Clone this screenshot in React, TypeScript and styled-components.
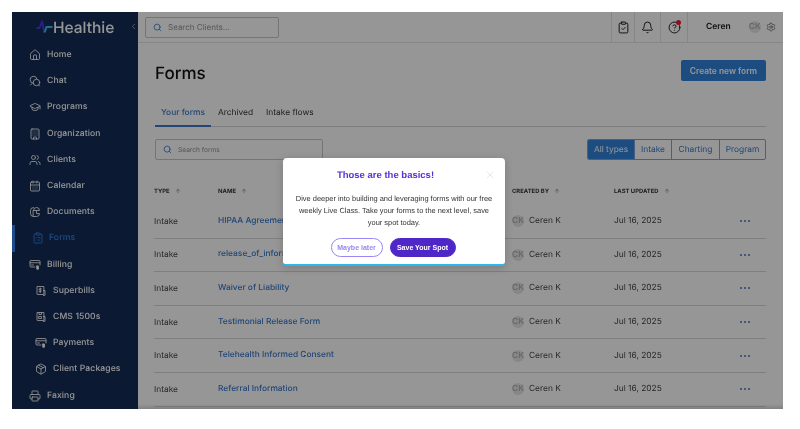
import React from 'react';
import styled, { createGlobalStyle } from 'styled-components';
import {
  ArrowUp,
  Bell,
  Building,
  CalendarDays,
  ChevronLeft,
  ClipboardCheck,
  ClipboardList,
  CircleHelp,
  GraduationCap,
  House,
  Package,
  Printer,
  Search,
  Settings,
  Users,
  X,
} from 'lucide-react';

const GlobalStyle = createGlobalStyle`
  html, body {
    margin: 0;
    padding: 0;
    background: #fff;
    font-family: Inter, "Liberation Sans", sans-serif;
    text-rendering: geometricPrecision;
    -webkit-font-smoothing: antialiased;
  }
  * {
    box-sizing: border-box;
  }
`;

const Page = styled.div`
  width: 800px;
  height: 429px;
  padding: 12px 17px 20px 12px;
`;

const Frame = styled.div`
  position: relative;
  display: flex;
  height: 397px;
  overflow: hidden;
  background: #fff;
  filter: blur(0.55px);
`;

const Sidebar = styled.aside`
  width: 126px;
  flex-shrink: 0;
  background: #132c56;
  display: flex;
  flex-direction: column;
`;

const Brand = styled.div`
  height: 30px;
  display: flex;
  align-items: center;
  padding-left: 24px;
  color: #fff;
  font-size: 15.5px;
  font-weight: 500;
  position: relative;
`;

const Collapse = styled.span`
  position: absolute;
  right: 0;
  top: 10px;
  color: #b5b5b5;
  display: flex;
`;

const Nav = styled.nav`
  display: flex;
  flex-direction: column;
`;

const NavItem = styled.div<{ $level: number; $active?: boolean }>`
  height: 26.2px;
  display: flex;
  align-items: center;
  gap: ${(p) => (p.$active ? '5px' : '6px')};
  padding-left: ${(p) => 14 + p.$level * 3}px;
  color: ${(p) => (p.$active ? '#3083ea' : '#fff')};
  font-size: 8.6px;
  font-weight: 500;
  letter-spacing: 0.1px;
  border-left: 3px solid ${(p) => (p.$active ? '#3083ea' : 'transparent')};
  svg {
    width: 12px;
    height: 12px;
    flex-shrink: 0;
    stroke-width: 1.7;
  }
`;

const Main = styled.main`
  flex: 1;
  min-width: 0;
  display: flex;
  flex-direction: column;
`;

const Topbar = styled.header`
  height: 31px;
  flex-shrink: 0;
  display: flex;
  align-items: center;
  padding-left: 7px;
  border-bottom: 1px solid #e4e4e4;
`;

const SearchBox = styled.div<{ $w: number; $fs: number; $gap: number }>`
  width: ${(p) => p.$w}px;
  height: 21px;
  display: flex;
  align-items: center;
  gap: ${(p) => p.$gap}px;
  padding-left: 7px;
  border: 1px solid #c4c8ce;
  border-radius: 2px;
  color: #8f9399;
  font-size: ${(p) => p.$fs}px;
  svg {
    width: 9px;
    height: 9px;
    color: #3d79c8;
    stroke-width: 2.2;
  }
`;

const TopActions = styled.div`
  margin-left: auto;
  height: 100%;
  display: flex;
  align-items: stretch;
`;

const TopCell = styled.div<{ $w: number }>`
  width: ${(p) => p.$w}px;
  display: flex;
  align-items: center;
  justify-content: center;
  border-left: 1px solid #e4e4e4;
  color: #111;
  position: relative;
  svg {
    width: 13px;
    height: 13px;
    stroke-width: 1.7;
  }
`;

const RedDot = styled.span`
  position: absolute;
  top: 8px;
  right: 6px;
  width: 5px;
  height: 5px;
  border-radius: 50%;
  background: #ee1c2e;
`;

const UserArea = styled.div`
  width: 96px;
  display: flex;
  align-items: center;
  padding-left: 18px;
  border-left: 1px solid #e4e4e4;
  font-size: 8.5px;
  font-weight: 600;
  color: #222;
`;

const Gear = styled.span`
  display: flex;
  margin-left: 5px;
  color: #555;
  svg {
    width: 10px;
    height: 10px;
    stroke-width: 1.6;
  }
`;

const Avatar = styled.span<{ $push?: number }>`
  width: 12px;
  height: 12px;
  margin-left: ${(p) => p.$push ?? 0}px;
  flex-shrink: 0;
  border-radius: 50%;
  background: #e5e5e5;
  color: #adadad;
  display: inline-flex;
  align-items: center;
  justify-content: center;
  font-size: 8.4px;
  font-weight: 500;
`;

const Content = styled.section`
  flex: 1;
  min-height: 0;
  overflow: hidden;
  padding: 0 17px 0 16px;
  position: relative;
`;

const TitleRow = styled.div`
  height: 60px;
  display: flex;
  justify-content: space-between;
  align-items: flex-start;
  padding-top: 17px;
`;

const Title = styled.h1`
  margin: 0 0 0 1px;
  padding-top: 2px;
  font-size: 17px;
  font-weight: 500;
  line-height: 24px;
  color: #111;
`;

const CreateButton = styled.button`
  width: 85px;
  height: 21px;
  padding: 0;
  border: 0;
  border-radius: 2px;
  background: #3282dc;
  color: #fff;
  font: 600 8.4px Inter, sans-serif;
`;

const Tabs = styled.div`
  margin-left: 1px;
  height: 24px;
  display: flex;
  align-items: flex-start;
  border-bottom: 1px solid #d4d4d4;
`;

const Tab = styled.div<{ $active?: boolean }>`
  height: 24px;
  margin-right: ${(p) => (p.$active ? '7px' : '13px')};
  padding: ${(p) => (p.$active ? '0 6px' : '0')};
  line-height: 20px;
  font-size: 8.4px;
  font-weight: ${(p) => (p.$active ? 500 : 400)};
  color: ${(p) => (p.$active ? '#3a78c9' : '#333')};
  border-bottom: ${(p) => (p.$active ? '2px solid #3a78c9' : '0')};
`;

const FilterRow = styled.div`
  margin: 12px 0 0 1px;
  display: flex;
  justify-content: space-between;
`;

const Segments = styled.div`
  display: flex;
  height: 21px;
  border: 1px solid #7ba6dd;
  border-radius: 2px;
  overflow: hidden;
`;

const Segment = styled.div<{ $w: number; $active?: boolean }>`
  width: ${(p) => p.$w}px;
  display: flex;
  align-items: center;
  justify-content: center;
  font-size: 8.4px;
  color: ${(p) => (p.$active ? '#fff' : '#3a78c9')};
  background: ${(p) => (p.$active ? '#3282dc' : 'transparent')};
  & + & {
    border-left: 1px solid #7ba6dd;
  }
`;

const GRID = '64px 294px 102px 126px 1fr';

const HeadRow = styled.div`
  display: grid;
  grid-template-columns: ${GRID};
  align-items: center;
  height: 18px;
  margin: 22px 0 5px;
`;

const HeadCell = styled.div`
  display: flex;
  align-items: center;
  gap: 5px;
  font-size: 5.9px;
  font-weight: 700;
  color: #333;
  svg {
    width: 6px;
    height: 6px;
    color: #666;
  }
`;

const Row = styled.div`
  display: grid;
  grid-template-columns: ${GRID};
  align-items: center;
  height: 33.6px;
  border-bottom: 1px solid #d9d9d9;
  font-size: 8.4px;
  color: #444;
`;

const TypeCell = styled.div`
  padding-top: 1px;
`;

const NameCell = styled.div`
  padding-bottom: 1px;
  font-weight: 500;
  color: #3a78c9;
`;

const CreatorCell = styled.div`
  display: flex;
  align-items: center;
  gap: 5px;
`;

const Dots = styled.div`
  display: flex;
  justify-content: flex-end;
  gap: 2px;
  padding-right: 16px;
  span {
    width: 2px;
    height: 2px;
    border-radius: 50%;
    background: #3a78c9;
  }
`;

const BottomFade = styled.div`
  position: absolute;
  left: 0;
  right: 0;
  bottom: 0;
  height: 5px;
  background: linear-gradient(rgba(0, 0, 0, 0), rgba(0, 0, 0, 0.14));
`;

const Overlay = styled.div`
  position: absolute;
  inset: 0;
  background: rgba(0, 0, 0, 0.41);
  display: flex;
  align-items: center;
  justify-content: center;
  padding: 3px 7px 0 0;
`;

const Modal = styled.div`
  position: relative;
  width: 222px;
  height: 108px;
  padding-top: 11px;
  background: #fff;
  border-radius: 4px;
  border-bottom: 2px solid #2cb8ec;
  box-shadow: 0 2px 8px rgba(0, 0, 0, 0.18);
  display: flex;
  flex-direction: column;
  align-items: center;
  font-family: "Liberation Sans", Arial, sans-serif;
`;

const Close = styled.span`
  position: absolute;
  top: 11px;
  right: 9px;
  display: flex;
  color: #e6e8ea;
  svg {
    width: 12px;
    height: 12px;
  }
`;

const ModalTitle = styled.h2`
  margin: 0;
  padding-right: 17px;
  font-size: 9.5px;
  line-height: 13px;
  font-weight: 700;
  color: #5a2fd8;
`;

const ModalBody = styled.p`
  margin: 11px 0 0;
  width: 200px;
  text-align: center;
  font-size: 7.45px;
  line-height: 12px;
  color: #333;
`;

const ModalActions = styled.div`
  margin-top: 9px;
  padding-right: 2px;
  display: flex;
  gap: 7px;
`;

const Pill = styled.button<{ $primary?: boolean }>`
  height: 19px;
  padding: 0;
  width: ${(p) => (p.$primary ? '66px' : '52px')};
  border-radius: 10px;
  border: 1px solid ${(p) => (p.$primary ? '#4f27c9' : '#9c86f7')};
  background: ${(p) => (p.$primary ? '#4f27c9' : '#fff')};
  color: ${(p) => (p.$primary ? '#fff' : '#9c86f7')};
  font: 700 7px "Liberation Sans", Arial, sans-serif;
`;

const LogoIcon = () => (
  <svg width="17" height="14" viewBox="0 0 17 14" fill="none">
    <path d="M0.5 8 L3.5 8 L6 1.5 L8.5 12.5" stroke="#4a37e8" strokeWidth="1.9" strokeLinejoin="round" />
    <path d="M8.5 12.5 L10.5 7 L16.5 7" stroke="#35c0ea" strokeWidth="1.9" strokeLinejoin="round" />
  </svg>
);

const Svg = ({ children }: { children: React.ReactNode }) => (
  <svg viewBox="0 0 24 24" fill="none" stroke="currentColor" strokeLinecap="round" strokeLinejoin="round">
    {children}
  </svg>
);

const ChatIcon = () => (
  <Svg>
    <path d="M9 16.5A7 7 0 1 1 16 8" />
    <circle cx="15" cy="15" r="6.5" />
    <path d="M3 20l3-3M19.5 20l1.5 2" />
  </Svg>
);

const DocumentsIcon = () => (
  <Svg>
    <path d="M9 21a6 6 0 0 1-6-6V9a6 6 0 0 1 6-6" />
    <path d="M9 9a6 6 0 0 1 6-6h0a6 6 0 0 1 6 6v0h-6" />
    <path d="M9 9h6v6h6a6 6 0 0 1-6 6H9z" />
  </Svg>
);

const BillIcon = () => (
  <Svg>
    <path d="M12 16H4a2 2 0 0 1-2-2V5a2 2 0 0 1 2-2h16a2 2 0 0 1 2 2v7" />
    <path d="M2 7.5h20M5 12h4" />
    <rect x="15.5" y="14" width="3.5" height="6.5" rx="0.5" fill="currentColor" />
  </Svg>
);

const SuperbillIcon = () => (
  <Svg>
    <path d="M17 19H5a1 1 0 0 1-1-1V3h13z" />
    <path d="M17 11h3v9a1 1 0 0 1-1 1h-2" />
    <path d="M12.5 7.5h-3a1.2 1.2 0 0 0 0 3h1.5a1.2 1.2 0 0 1 0 3h-3M10.5 6v9" />
  </Svg>
);

const CmsIcon = () => (
  <Svg>
    <path d="M17 19H5a1 1 0 0 1-1-1V3h13z" />
    <path d="M17 11h3v9a1 1 0 0 1-1 1h-2" />
    <path d="M8 3v4h5V3M8 11h5v4H8z" />
  </Svg>
);

const navItems = [
  { label: 'Home', icon: <House />, level: 0 },
  { label: 'Chat', icon: <ChatIcon />, level: 0 },
  { label: 'Programs', icon: <GraduationCap />, level: 0 },
  { label: 'Organization', icon: <Building />, level: 0 },
  { label: 'Clients', icon: <Users />, level: 0 },
  { label: 'Calendar', icon: <CalendarDays />, level: 0 },
  { label: 'Documents', icon: <DocumentsIcon />, level: 0 },
  { label: 'Forms', icon: <ClipboardList />, level: 1, active: true },
  { label: 'Billing', icon: <BillIcon />, level: 0 },
  { label: 'Superbills', icon: <SuperbillIcon />, level: 2 },
  { label: 'CMS 1500s', icon: <CmsIcon />, level: 2 },
  { label: 'Payments', icon: <BillIcon />, level: 2 },
  { label: 'Client Packages', icon: <Package />, level: 2 },
  { label: 'Faxing', icon: <Printer />, level: 0 },
];

const forms = [
  'HIPAA Agreement',
  'release_of_information',
  'Waiver of Liability',
  'Testimonial Release Form',
  'Telehealth Informed Consent',
  'Referral Information',
];

const columns = ['TYPE', 'NAME', 'CREATED BY', 'LAST UPDATED'];

const App = () => (
  <Page>
    <GlobalStyle />
    <Frame>
      <Sidebar>
        <Brand>
          <LogoIcon />
          Healthie
          <Collapse>
            <ChevronLeft size={9} strokeWidth={2} />
          </Collapse>
        </Brand>
        <Nav>
          {navItems.map((item) => (
            <NavItem key={item.label} $level={item.level} $active={item.active}>
              {item.icon}
              {item.label}
            </NavItem>
          ))}
        </Nav>
      </Sidebar>
      <Main>
        <Topbar>
          <SearchBox $w={134} $fs={8} $gap={6}>
            <Search />
            Search Clients...
          </SearchBox>
          <TopActions>
            <TopCell $w={23}>
              <ClipboardCheck />
            </TopCell>
            <TopCell $w={26}>
              <Bell />
            </TopCell>
            <TopCell $w={27}>
              <CircleHelp />
              <RedDot />
            </TopCell>
            <UserArea>
              Ceren
              <Avatar $push={18}>CK</Avatar>
              <Gear>
                <Settings />
              </Gear>
            </UserArea>
          </TopActions>
        </Topbar>
        <Content>
          <TitleRow>
            <Title>Forms</Title>
            <CreateButton>Create new form</CreateButton>
          </TitleRow>
          <Tabs>
            <Tab $active>Your forms</Tab>
            <Tab>Archived</Tab>
            <Tab>Intake flows</Tab>
          </Tabs>
          <FilterRow>
            <SearchBox $w={168} $fs={6.6} $gap={6}>
              <Search />
              Search forms
            </SearchBox>
            <Segments>
              <Segment $w={46} $active>
                All types
              </Segment>
              <Segment $w={37}>Intake</Segment>
              <Segment $w={48}>Charting</Segment>
              <Segment $w={46}>Program</Segment>
            </Segments>
          </FilterRow>
          <HeadRow>
            {columns.map((col) => (
              <HeadCell key={col}>
                {col}
                <ArrowUp />
              </HeadCell>
            ))}
          </HeadRow>
          {forms.map((name) => (
            <Row key={name}>
              <TypeCell>Intake</TypeCell>
              <NameCell>{name}</NameCell>
              <CreatorCell>
                <Avatar>CK</Avatar>
                Ceren K
              </CreatorCell>
              <div>Jul 16, 2025</div>
              <Dots>
                <span />
                <span />
                <span />
              </Dots>
            </Row>
          ))}
          <BottomFade />
        </Content>
      </Main>
      <Overlay>
        <Modal>
          <Close>
            <X />
          </Close>
          <ModalTitle>Those are the basics!</ModalTitle>
          <ModalBody>
            Dive deeper into building and leveraging forms with our free weekly Live Class. Take your forms to the next
            level, save your spot today.
          </ModalBody>
          <ModalActions>
            <Pill>Maybe later</Pill>
            <Pill $primary>Save Your Spot</Pill>
          </ModalActions>
        </Modal>
      </Overlay>
    </Frame>
  </Page>
);

export default App;
